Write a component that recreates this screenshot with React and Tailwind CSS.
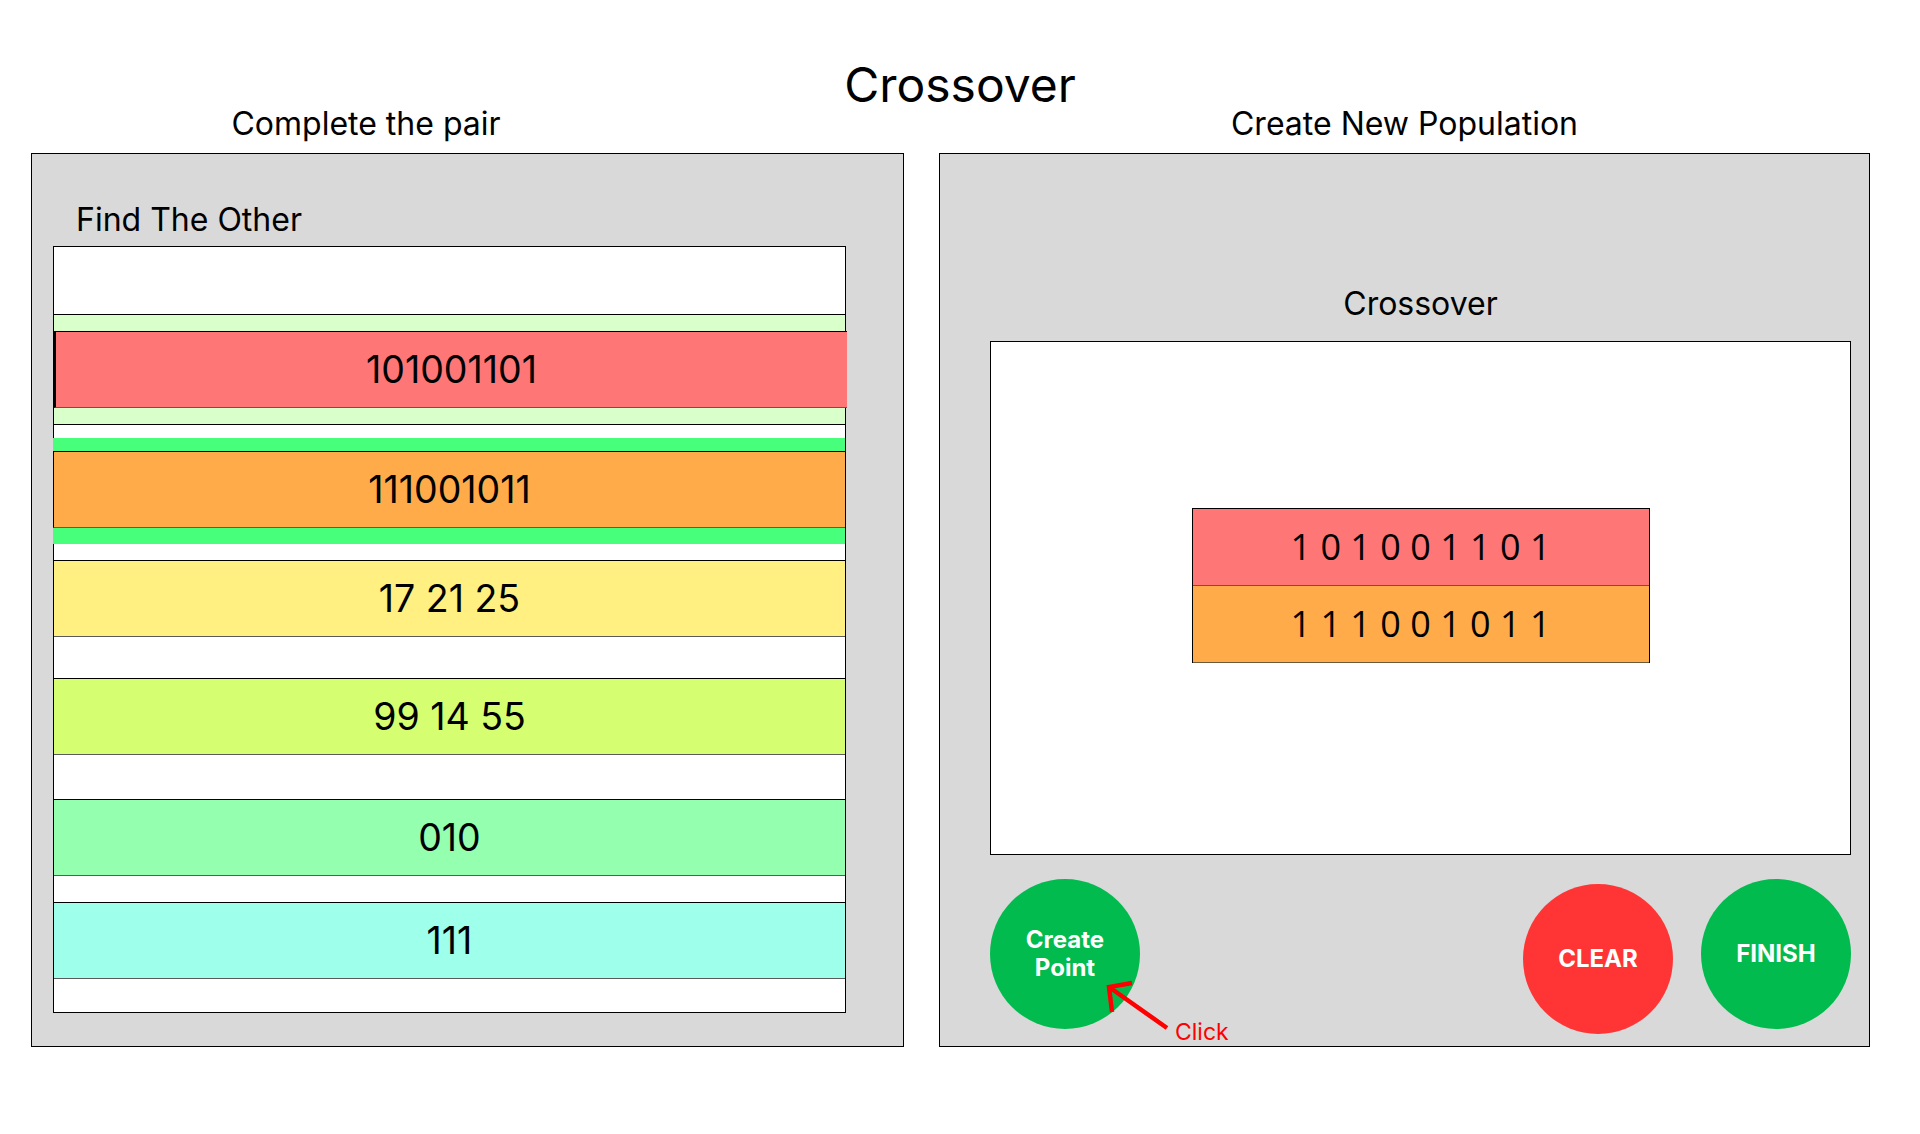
import React from 'react';

const Row = ({ label, bg, className = '' }) => (
    <div className={`flex h-[77px] items-center justify-center border-t border-b border-t-black border-b-[#5a5a5a] text-[37.5px] leading-none ${bg} ${className}`}>
        {label}
    </div>
);

const RoundButton = ({ children, bg, className = '' }) => (
    <button className={`flex h-[150px] w-[150px] shrink-0 flex-col items-center justify-center rounded-full text-[24px] font-bold leading-[28px] text-white ${bg} ${className}`}>
        {children}
    </button>
);

const App = () => {
    return (
        <div className="min-h-[1134px] bg-white font-['Inter',sans-serif] text-black">
            <h1 className="pt-[65px] text-center text-[48px] font-normal leading-[40px]">Crossover</h1>

            <div className="mt-[3px] flex gap-[35px] pl-[31px]">
                {/* Left: pairing list */}
                <section className="flex w-[873px] flex-col">
                    <h2 className="w-[670px] text-center text-[32px] leading-none">Complete the pair</h2>
                    <div className="mt-[13px] h-[894px] border border-black bg-[#d9d9d9] pl-[21px] pt-[50px]">
                        <h3 className="ml-[23px] text-[32px] leading-none">Find The Other</h3>
                        <div className="mt-[10px] flex h-[767px] w-[793px] flex-col border border-black bg-white">
                            <div className="h-[67px] shrink-0" />
                            <div className="flex flex-col border-y border-black bg-[#d9ffca] py-[16px]">
                                <Row label="101001101" bg="bg-[#ff7676]" className="-mr-[2px] border-l-2 border-l-black" />
                            </div>
                            <div className="h-[13px] shrink-0" />
                            <div className="-ml-px flex flex-col bg-[#48ff7b] pb-[16px] pt-[13px]">
                                <Row label="111001011" bg="bg-[#ffab4a]" className="border-l border-l-black" />
                            </div>
                            <div className="h-[16px] shrink-0" />
                            <Row label="17 21 25" bg="bg-[#fff081]" />
                            <div className="h-[41px] shrink-0" />
                            <Row label="99 14 55" bg="bg-[#d5ff71]" />
                            <div className="h-[44px] shrink-0" />
                            <Row label="010" bg="bg-[#94ffae]" />
                            <div className="h-[26px] shrink-0" />
                            <Row label="111" bg="bg-[#9effeb]" />
                        </div>
                    </div>
                </section>

                {/* Right: new population */}
                <section className="flex w-[931px] flex-col">
                    <h2 className="text-center text-[32px] leading-none">Create New Population</h2>
                    <div className="mt-[13px] h-[894px] border border-black bg-[#d9d9d9] pl-[50px] pr-[18px] pt-[134px]">
                        <h3 className="text-center text-[32px] leading-none">Crossover</h3>
                        <div className="mt-[21px] flex h-[514px] flex-col items-center border border-black bg-white pt-[166px]">
                            <div className="flex w-[458px] flex-col border-x border-black font-['Open_Sans',sans-serif] text-[36px] leading-none">
                                <div className="flex h-[78px] items-center justify-center border-y border-t-black border-b-[#5a5a5a] bg-[#ff7676]">
                                    1 0 1 0 0 1 1 0 1
                                </div>
                                <div className="flex h-[77px] items-center justify-center border-b border-t-0 border-b-[#6b5a3a] bg-[#ffab4a]">
                                    1 1 1 0 0 1 0 1 1
                                </div>
                            </div>
                        </div>

                        <div className="mt-[24px] flex items-start">
                            <div className="relative">
                                <RoundButton bg="bg-[#02bb4e]">
                                    <span>Create</span>
                                    <span>Point</span>
                                </RoundButton>
                                <svg className="absolute left-[110px] top-[98px]" width="70" height="56" viewBox="0 0 70 56" fill="none">
                                    <path d="M67 51 L9 10 M32 6 L9 10 L12 35" stroke="#ff0000" strokeWidth="4.5" />
                                </svg>
                                <span className="absolute left-[185px] top-[142px] text-[23px] leading-none text-[#ff0000]">Click</span>
                            </div>
                            <RoundButton bg="bg-[#ff3535]" className="ml-auto mt-[5px]">CLEAR</RoundButton>
                            <RoundButton bg="bg-[#02bb4e]" className="ml-[28px]">FINISH</RoundButton>
                        </div>
                    </div>
                </section>
            </div>
        </div>
    );
};

export default App;
